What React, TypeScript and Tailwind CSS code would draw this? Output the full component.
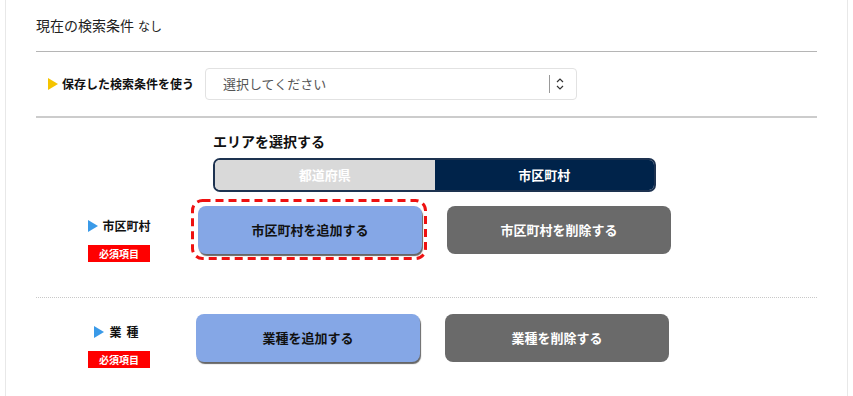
import React from 'react';

const Tri = ({ color }: { color: string }) => (
  <svg width="10" height="12" viewBox="0 0 10 12" className="shrink-0">
    <polygon points="0,0 10,6 0,12" fill={color} />
  </svg>
);

const RowLabel = ({ label, top }: { label: React.ReactNode; top: string }) => (
  <div className={`w-[155px] shrink-0 pl-[52px] ${top}`}>
    <div className="flex w-[62px] flex-col items-center">
      <div className="flex h-[18px] items-center gap-[5px] whitespace-nowrap text-[12px] font-bold text-[#111]">
        <Tri color="#3a9ae8" />
        {label}
      </div>
      <div className="mt-[10px] flex h-[17px] w-[62px] items-center justify-center bg-[#ff0000] text-[10px] font-bold text-white">
        必須項目
      </div>
    </div>
  </div>
);

export default function App() {
  return (
    <div
      className="h-[396px] w-full overflow-hidden bg-white px-[5px]"
      style={{ fontFamily: '"Noto Sans CJK JP", "Noto Sans", sans-serif' }}
    >
      <div className="h-full border-x border-[#e8e8e8] px-[30px]">
        {/* current conditions */}
        <div className="flex items-baseline pt-[15px] pb-[15px] text-[14px] text-[#222]">
          現在の検索条件<span className="ml-[4px] text-[12px]">なし</span>
        </div>
        <div className="h-px bg-[#b5b5b5]" />

        {/* saved conditions */}
        <div className="flex items-center py-[16px]">
          <div className="flex w-[169px] items-center gap-[4px] whitespace-nowrap pl-[12px] text-[12px] font-bold text-[#111]">
            <Tri color="#f5c400" />
            保存した検索条件を使う
          </div>
          <div className="flex h-[32px] w-[372px] items-center rounded-[4px] border border-[#e2e2e2] pl-[17px] pr-[12px] text-[13px] text-[#555]">
            <span className="flex-1">選択してください</span>
            <span className="mr-[6px] h-[18px] w-px bg-[#999]" />
            <svg width="8" height="14" viewBox="0 0 8 14">
              <path d="M1 5 L4 2 L7 5" fill="none" stroke="#333" strokeWidth="1.2" />
              <path d="M1 9 L4 12 L7 9" fill="none" stroke="#333" strokeWidth="1.2" />
            </svg>
          </div>
        </div>
        <div className="h-[2px] bg-[#cccccc]" />

        {/* area */}
        <div className="ml-[177px] pt-[13px]">
          <div className="text-[14px] font-bold text-[#111]">エリアを選択する</div>
          <div className="mt-[6px] flex h-[34px] w-[443px] overflow-hidden rounded-[7px] border-2 border-[#1d3250] text-[13px] font-bold text-white">
            <div className="flex flex-1 items-center justify-center bg-[#d9d9d9]">都道府県</div>
            <div className="flex flex-1 items-center justify-center bg-[#00234a]">市区町村</div>
          </div>
        </div>

        <div className="flex items-start pt-[7px] pb-[35px]">
          <RowLabel label="市区町村" top="pt-[18px]" />
          <div className="relative h-[61px] w-[236px] pt-[7px] pl-[7px]">
            <svg className="pointer-events-none absolute inset-0" width="236" height="61">
              <rect
                x="1.5"
                y="1.5"
                width="233"
                height="58"
                rx="10"
                fill="none"
                stroke="#ee1111"
                strokeWidth="3"
                strokeDasharray="8 5"
              />
            </svg>
            <button className="flex h-[48px] w-[224px] items-center justify-center rounded-[8px] bg-[#85a7e6] text-[13px] font-bold text-[#111] shadow-[1px_2px_1px_#666]">
              市区町村を追加する
            </button>
          </div>
          <button className="mt-[7px] ml-[20px] flex h-[48px] w-[224px] items-center justify-center rounded-[8px] bg-[#6a6a6a] text-[13px] font-bold text-white">
            市区町村を削除する
          </button>
        </div>

        <div className="border-t border-dotted border-[#c8c8c8]" />

        <div className="flex items-start pt-[16px]">
          <RowLabel label={<span className="tracking-[5px]">業種</span>} top="pt-[9px]" />
          <button className="ml-[5px] flex h-[48px] w-[224px] items-center justify-center rounded-[8px] bg-[#85a7e6] text-[13px] font-bold text-[#111] shadow-[1px_2px_1px_#666]">
            業種を追加する
          </button>
          <button className="ml-[25px] flex h-[48px] w-[224px] items-center justify-center rounded-[8px] bg-[#6a6a6a] text-[13px] font-bold text-white">
            業種を削除する
          </button>
        </div>
      </div>
    </div>
  );
}
